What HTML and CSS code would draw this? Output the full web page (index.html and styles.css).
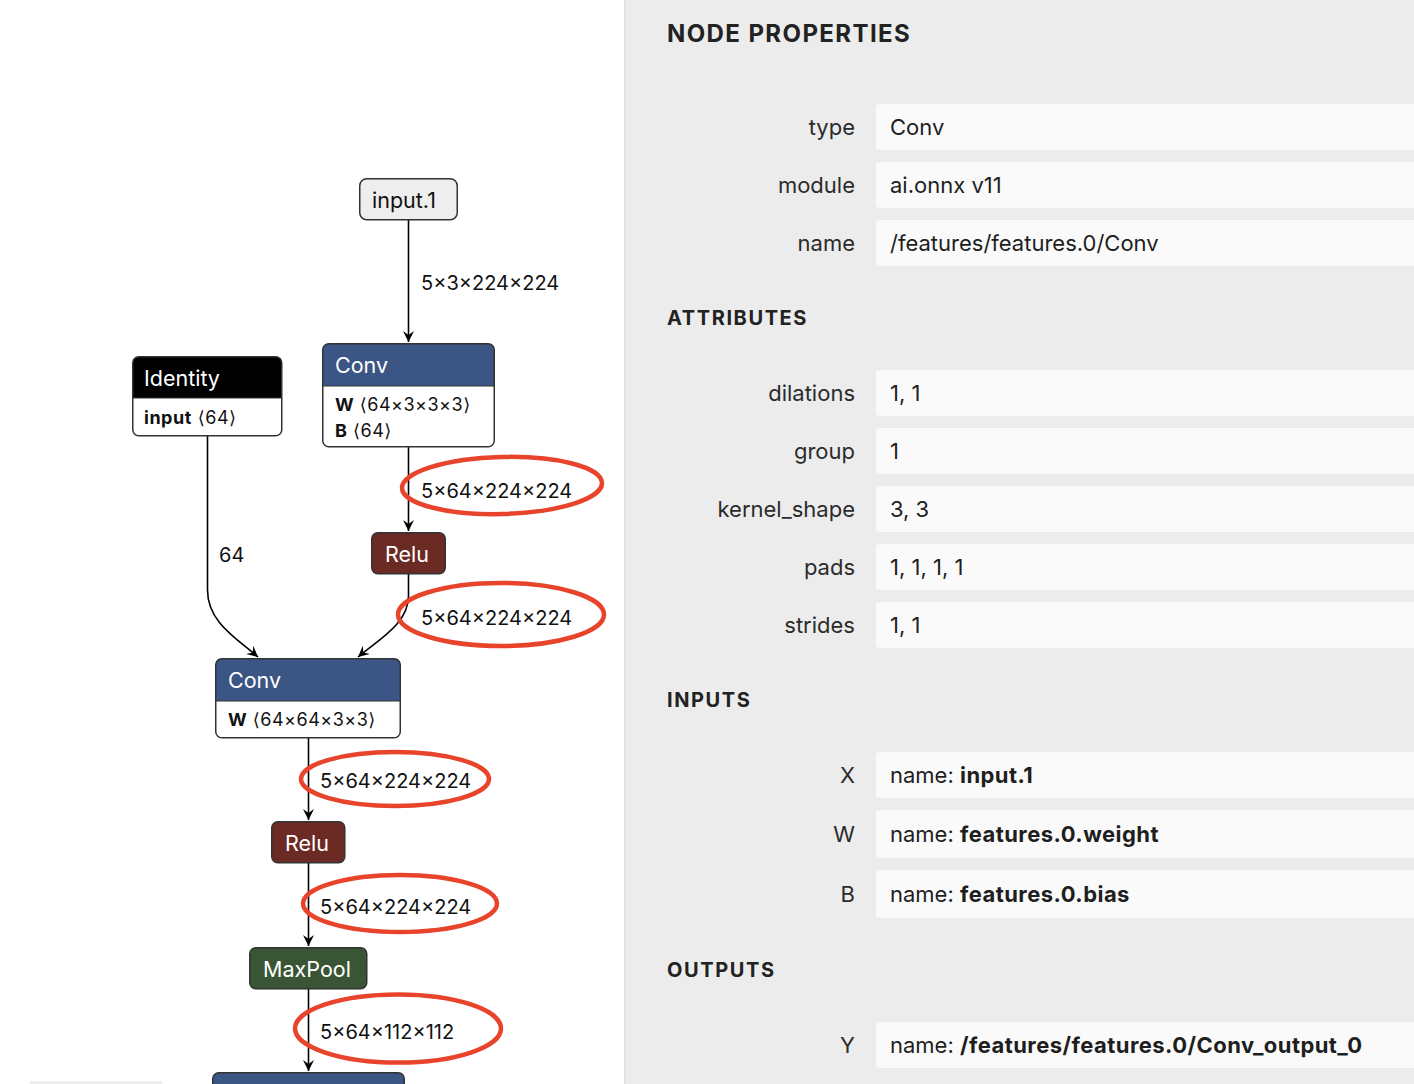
FILE: index.html
```html
<!DOCTYPE html>
<html lang="en">
<head>
<meta charset="utf-8">
<title>Node Properties</title>
<link rel="stylesheet" href="styles.css">
</head>
<body>
<div class="app">
  <div class="canvas">
    <svg class="graph" width="624" height="1084" viewBox="0 0 624 1084" xmlns="http://www.w3.org/2000/svg">
      <defs>
        <marker id="arrow" markerUnits="userSpaceOnUse" markerWidth="16" markerHeight="16" refX="0" refY="0" viewBox="-13 -8 16 16" orient="auto">
          <path d="M0,0 L-11,-5.5 L-7,0 L-11,5.5 Z" fill="#000"/>
        </marker>
      </defs>

      <!-- edges -->
      <g class="edges">
        <path d="M408.5,220 V342" marker-end="url(#arrow)"/>
        <path d="M408.5,447 V531" marker-end="url(#arrow)"/>
        <path d="M207.5,436 V590 C207.5,622 236,638 258,657" marker-end="url(#arrow)"/>
        <path d="M408.5,574 V596 C408.5,624 378,640 358,657" marker-end="url(#arrow)"/>
        <path d="M308.5,738 V820" marker-end="url(#arrow)"/>
        <path d="M308.5,863 V946" marker-end="url(#arrow)"/>
        <path d="M308.5,989 V1071" marker-end="url(#arrow)"/>
      </g>

      <!-- edge labels -->
      <g class="edge-label">
        <text x="421" y="290">5×3×224×224</text>
        <text x="219" y="562">64</text>
        <text x="421" y="498">5×64×224×224</text>
        <text x="421" y="625">5×64×224×224</text>
        <text x="320" y="788">5×64×224×224</text>
        <text x="320" y="914">5×64×224×224</text>
        <text x="320" y="1039">5×64×112×112</text>
      </g>

      <!-- input.1 -->
      <rect class="node-outline" x="359.75" y="178.75" width="97.5" height="41" rx="7" fill="#eeeeee"/>
      <text class="node-title dark" x="372" y="208">input.1</text>

      <!-- Identity -->
      <rect x="132.75" y="356.75" width="149" height="79" rx="6" fill="#ffffff"/>
      <path d="M132.75,398 V362.75 Q132.75,356.75 138.75,356.75 H275.75 Q281.75,356.75 281.75,362.75 V398 Z" fill="#000000"/>
      <line class="sep" x1="132.75" y1="398" x2="281.75" y2="398"/>
      <rect class="node-outline" x="132.75" y="356.75" width="149" height="79" rx="6" fill="none"/>
      <text class="node-title" x="144" y="386">Identity</text>
      <text class="node-attr" x="144" y="424"><tspan class="attr-name">input</tspan><tspan dx="6">⟨64⟩</tspan></text>

      <!-- Conv 1 -->
      <rect x="322.75" y="343.75" width="171.5" height="103" rx="6" fill="#ffffff"/>
      <path d="M322.75,386 V349.75 Q322.75,343.75 328.75,343.75 H488.25 Q494.25,343.75 494.25,349.75 V386 Z" fill="#3b5585"/>
      <line class="sep" x1="322.75" y1="386" x2="494.25" y2="386"/>
      <rect class="node-outline" x="322.75" y="343.75" width="171.5" height="103" rx="6" fill="none"/>
      <text class="node-title" x="335" y="373">Conv</text>
      <text class="node-attr" x="335" y="411"><tspan class="attr-name">W</tspan> ⟨64×3×3×3⟩</text>
      <text class="node-attr" x="335" y="437"><tspan class="attr-name">B</tspan> ⟨64⟩</text>

      <!-- Relu 1 -->
      <rect class="node-outline" x="371.75" y="532.75" width="73.5" height="41" rx="6" fill="#6b2b24"/>
      <text class="node-title" x="407" y="562" text-anchor="middle">Relu</text>

      <!-- Conv 2 -->
      <rect x="215.75" y="658.75" width="184.5" height="79" rx="6" fill="#ffffff"/>
      <path d="M215.75,701 V664.75 Q215.75,658.75 221.75,658.75 H394.25 Q400.25,658.75 400.25,664.75 V701 Z" fill="#3b5585"/>
      <line class="sep" x1="215.75" y1="701" x2="400.25" y2="701"/>
      <rect class="node-outline" x="215.75" y="658.75" width="184.5" height="79" rx="6" fill="none"/>
      <text class="node-title" x="228" y="688">Conv</text>
      <text class="node-attr" x="228" y="726"><tspan class="attr-name">W</tspan> ⟨64×64×3×3⟩</text>

      <!-- Relu 2 -->
      <rect class="node-outline" x="271.75" y="821.75" width="73" height="41" rx="6" fill="#6b2b24"/>
      <text class="node-title" x="307" y="851" text-anchor="middle">Relu</text>

      <!-- MaxPool -->
      <rect class="node-outline" x="249.75" y="947.75" width="117" height="41" rx="6" fill="#3a5535"/>
      <text class="node-title" x="307" y="977" text-anchor="middle">MaxPool</text>

      <!-- Conv 3 (clipped) -->
      <rect class="node-outline" x="212.75" y="1072.75" width="191.5" height="60" rx="6" fill="#3b5585"/>

      <!-- highlight ellipses -->
      <g class="mark">
        <ellipse cx="502" cy="485.5" rx="100" ry="28.5" transform="rotate(-1.5 502 485.5)"/>
        <ellipse cx="501" cy="614.5" rx="103" ry="31.5"/>
        <ellipse cx="395" cy="779" rx="94" ry="27"/>
        <ellipse cx="400" cy="903.5" rx="97" ry="28.5"/>
        <ellipse cx="398" cy="1028.5" rx="103" ry="34"/>
      </g>

      <line class="scroll" x1="30" y1="1082.5" x2="162" y2="1082.5"/>
    </svg>
  </div>

  <aside class="panel">
    <h2 class="title">NODE PROPERTIES</h2>
    <div class="rows">
      <div class="row"><div class="label">type</div><div class="value">Conv</div></div>
      <div class="row"><div class="label">module</div><div class="value">ai.onnx v11</div></div>
      <div class="row"><div class="label">name</div><div class="value">/features/features.0/Conv</div></div>
    </div>

    <h3 class="section">ATTRIBUTES</h3>
    <div class="rows">
      <div class="row"><div class="label">dilations</div><div class="value">1, 1</div></div>
      <div class="row"><div class="label">group</div><div class="value">1</div></div>
      <div class="row"><div class="label">kernel_shape</div><div class="value">3, 3</div></div>
      <div class="row"><div class="label">pads</div><div class="value">1, 1, 1, 1</div></div>
      <div class="row"><div class="label">strides</div><div class="value">1, 1</div></div>
    </div>

    <h3 class="section">INPUTS</h3>
    <div class="rows">
      <div class="row"><div class="label">X</div><div class="value">name:&nbsp;<b>input.1</b></div></div>
      <div class="row tall"><div class="label">W</div><div class="value">name:&nbsp;<b>features.0.weight</b></div></div>
      <div class="row tall"><div class="label">B</div><div class="value">name:&nbsp;<b>features.0.bias</b></div></div>
    </div>

    <h3 class="section">OUTPUTS</h3>
    <div class="rows">
      <div class="row"><div class="label">Y</div><div class="value">name:&nbsp;<b>/features/features.0/Conv_output_0</b></div></div>
    </div>
  </aside>
</div>
</body>
</html>
```

FILE: styles.css
```css
html, body {
  margin: 0;
  padding: 0;
  background: #ffffff;
}

body {
  font-family: "Inter", "Noto Sans", "DejaVu Sans", sans-serif;
  color: #222;
  overflow: hidden;
}

.app {
  display: flex;
  width: 1414px;
  height: 1084px;
  overflow: hidden;
}

.canvas {
  width: 624px;
  flex: none;
  background: #ffffff;
}

.graph {
  display: block;
  font-family: "Inter", "Noto Sans", "DejaVu Sans", sans-serif;
}

.edges path {
  fill: none;
  stroke: #000;
  stroke-width: 1.6;
}

.edge-label text {
  font-size: 20px;
  fill: #111;
}

.node-outline {
  stroke: #333;
  stroke-width: 1.5;
}

.sep {
  stroke: #333;
  stroke-width: 1.2;
}

.node-title {
  font-size: 21.5px;
  fill: #ffffff;
}

.node-title.dark {
  fill: #111;
}

.node-attr {
  font-size: 18px;
  letter-spacing: 0.5px;
  fill: #111;
}

.attr-name {
  font-weight: 700;
}

.mark ellipse {
  fill: none;
  stroke: #e8432b;
  stroke-width: 4.5;
}

.scroll {
  stroke: #e6e6e6;
  stroke-width: 2;
}

.panel {
  flex: 1;
  background: #ececec;
  border-left: 2px solid #e3e3e3;
  padding: 22px 0 0 41px;
  overflow: hidden;
  box-sizing: border-box;
}

.title,
.section {
  margin: 0;
  line-height: 24px;
  font-weight: 700;
  color: #222;
}

.title {
  font-size: 24px;
  letter-spacing: 1.4px;
  margin-bottom: 58px;
}

.section {
  font-size: 20px;
  letter-spacing: 1.6px;
  margin-top: 40px;
  margin-bottom: 40px;
}

.rows {
  display: flex;
  flex-direction: column;
  gap: 12px;
}

.row {
  display: grid;
  grid-template-columns: 188px 1fr;
  column-gap: 21px;
  height: 46px;
  font-size: 22px;
}

.row.tall {
  height: 48px;
}

.label {
  align-self: center;
  text-align: right;
  color: #2b2b2b;
}

.value {
  display: flex;
  align-items: center;
  background: #fafafa;
  border-radius: 4px;
  padding: 0 14px;
  margin-right: -60px;
  white-space: nowrap;
  color: #1e1e1e;
}

.value b {
  font-weight: 700;
  letter-spacing: 0.45px;
}
```
